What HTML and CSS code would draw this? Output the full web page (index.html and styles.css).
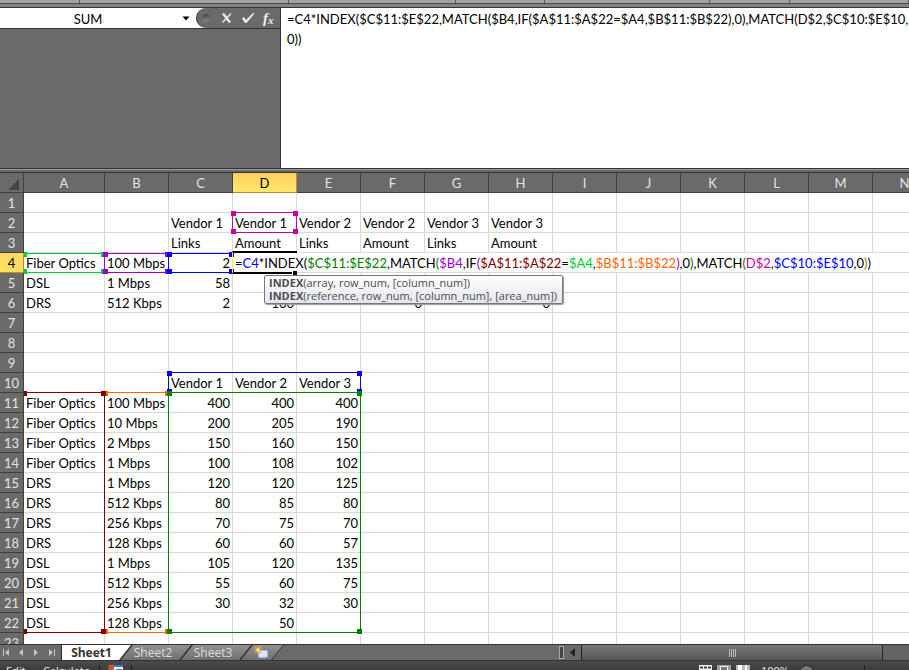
FILE: index.html
```
<!DOCTYPE html>
<html lang="en">
<head>
<meta charset="utf-8">
<title>Workbook</title>
<link rel="stylesheet" href="styles.css">
</head>
<body>
<div class="app">
  <div class="ribbon"><i></i><i></i><i></i><i></i><i></i><i></i><i></i></div>
  <header class="formula-bar">
    <div class="left-pane">
      <div class="name-row">
        <input class="name-box" type="text" value="SUM" aria-label="Name box">
        <button class="drop" aria-label="Open name list"><svg width="8" height="5" viewBox="0 0 8 5"><path d="M0.5 0.500h7L4 4.500z" fill="#000"/></svg></button>
        <div class="tools">
          <span class="knob"></span>
          <button aria-label="Cancel"><svg width="12" height="12" viewBox="0 0 12 12"><path d="M2 1.500L9 10.500" stroke="#e8e8e8" stroke-width="2.400" fill="none"/><path d="M10 1.500L1.500 10.500" stroke="#e8e8e8" stroke-width="1.400" fill="none"/></svg></button>
          <button aria-label="Enter"><svg width="14" height="12" viewBox="0 0 14 12"><path d="M1 6.500L3 5L5 8L12 1L13.500 1.500L5.500 11H4z" fill="#ededed"/></svg></button>
          <button class="fx" aria-label="Insert function">f<span>x</span></button>
        </div>
      </div>
    </div>
    <textarea class="formula" aria-label="Formula bar" spellcheck="false">=C4*INDEX($C$11:$E$22,MATCH($B4,IF($A$11:$A$22=$A4,$B$11:$B$22),0),MATCH(D$2,$C$10:$E$10,
0))</textarea>
  </header>
  <div class="splitter"></div>
  <main class="sheet">
    <table>
      <colgroup><col class="c-head"><col class="c-a"><col span="13"></colgroup>
      <thead><tr><th class="corner"><svg width="11" height="11" viewBox="0 0 11 11"><path d="M11 0v11H0z" fill="#454545"/></svg></th><th>A</th><th>B</th><th>C</th><th class="on">D</th><th>E</th><th>F</th><th>G</th><th>H</th><th>I</th><th>J</th><th>K</th><th>L</th><th>M</th><th>N</th></tr></thead>
      <tbody id="rows"></tbody>
    </table>
    <div class="ranges">
      <div class="range b-list"><i></i><i></i><i></i><i></i></div>
      <div class="range a-list"><i></i><i></i><i></i><i></i></div>
      <div class="range heads"><i></i><i></i><i></i><i></i></div>
      <div class="range data"><i></i><i></i><i></i><i></i></div>
      <div class="range vendor"><i></i><i></i><i></i><i></i></div>
      <div class="range key-a edit"><i></i><i></i><i></i><i></i></div>
      <div class="range key-b edit"><i></i><i></i><i></i><i></i></div>
      <div class="range count edit"><i></i><i></i><i></i><i></i></div>
      <div class="active"><i></i></div>
      <div class="hint"><div><b>INDEX</b>(array, row_num, [column_num])</div><div><b>INDEX</b>(reference, row_num, [column_num], [area_num])</div></div>
    </div>
  </main>
  <nav class="tabs">
    <div class="nav-buttons">
      <button aria-label="First sheet"><svg width="7" height="7" viewBox="0 0 7 7"><path d="M0 0h1v7H0zM6 0v7L2 3.500z"/></svg></button>
      <button aria-label="Previous sheet"><svg width="7" height="7" viewBox="0 0 7 7"><path d="M5 0v7L1 3.500z"/></svg></button>
      <button aria-label="Next sheet"><svg width="7" height="7" viewBox="0 0 7 7"><path d="M1 0v7L5 3.500z"/></svg></button>
      <button aria-label="Last sheet"><svg width="7" height="7" viewBox="0 0 7 7"><path d="M6 0h1v7H6zM1 0v7L5 3.500z"/></svg></button>
    </div>
    <button class="tab current"><span>Sheet1</span></button><button class="tab"><span>Sheet2</span></button><button class="tab"><span>Sheet3</span></button>
    <button class="tab add" aria-label="Insert worksheet"><svg width="15" height="13" viewBox="0 0 15 13"><path d="M4 4h10v7l-2 1H4z" fill="#dce6f5" stroke="#6c83ab"/><path d="M4 0v8M0 4h8M1 1l6 6M7 1L1 7" stroke="#f4a63a" stroke-width="1.200"/><circle cx="4" cy="4" r="1.500" fill="#fff3b0"/></svg></button>
    <div class="scroll">
      <span class="grip"></span>
      <button class="back" aria-label="Scroll left"><svg width="5" height="9" viewBox="0 0 5 9"><path d="M5 0v9L0 4.500z" fill="#222"/></svg></button>
      <div class="track"><div class="thumb"><i></i><i></i><i></i><i></i></div></div>
    </div>
  </nav>
  <footer class="status">
    <span class="mode">Edit</span><span class="calc">Calculate</span>
    <span class="macro"><svg width="15" height="12" viewBox="0 0 15 12"><path d="M1 0h14v12H1z" fill="#eef3fb"/><path d="M5 0h10v2H5zM8 4h6v1H8zM8 7h6v1H8z" fill="#3e74c8"/><circle cx="3" cy="3" r="3" fill="#d8472c"/></svg></span>
    <span class="views">
      <svg width="52" height="12" viewBox="0 0 52 12"><path d="M0 0h13v12H0z" fill="#eee"/><path d="M1 2.500h3M5 2.500h3M9 2.500h3" stroke="#444" stroke-width="2"/><path d="M18 0h14v12H18z" fill="#9aa0a8"/><path d="M21.500 1.500h7v9h-7z" fill="#777" stroke="#eee"/><path d="M37 0h14v12H37z" fill="#bbb"/><path d="M39 0h4v12h-4zM46 0h2v12h-2z" fill="#fff"/></svg>
      <span>100%</span><span class="zoom"></span><span class="mark"></span>
    </span>
  </footer>
</div>
<script src="sheet.js"></script>
</body>
</html>
```
FILE: sheet.js
```
const cells = {
  2: ["", "", "Vendor 1", "Vendor 1", "Vendor 2", "Vendor 2", "Vendor 3", "Vendor 3"],
  3: ["", "", "Links", "Amount", "Links", "Amount", "Links", "Amount"],
  4: ["Fiber Optics", "100 Mbps", 2],
  5: ["DSL", "1 Mbps", 58],
  6: ["DRS", "512 Kbps", 2, 160, "", 0, "", 0],
  10: ["", "", "Vendor 1", "Vendor 2", "Vendor 3"],
  11: ["Fiber Optics", "100 Mbps", 400, 400, 400],
  12: ["Fiber Optics", "10 Mbps", 200, 205, 190],
  13: ["Fiber Optics", "2 Mbps", 150, 160, 150],
  14: ["Fiber Optics", "1 Mbps", 100, 108, 102],
  15: ["DRS", "1 Mbps", 120, 120, 125],
  16: ["DRS", "512 Kbps", 80, 85, 80],
  17: ["DRS", "256 Kbps", 70, 75, 70],
  18: ["DRS", "128 Kbps", 60, 60, 57],
  19: ["DSL", "1 Mbps", 105, 120, 135],
  20: ["DSL", "512 Kbps", 55, 60, 75],
  21: ["DSL", "256 Kbps", 30, 32, 30],
  22: ["DSL", "128 Kbps", "", 50]
};
const formula = [
  ["", "="], ["blue", "C4"], ["", "*INDEX("], ["green", "$C$11:$E$22"], ["", ",MATCH"], ["green", "("],
  ["purple", "$B4"], ["", ",IF"], ["purple", "("], ["maroon", "$A$11:$A$22"], ["", "="], ["lime", "$A4"],
  ["", ","], ["orange", "$B$11:$B$22"], ["purple", ")"], ["", ",0"], ["green", ")"], ["", ",MATCH"],
  ["green", "("], ["pink", "D$2"], ["", ","], ["blue", "$C$10:$E$10"], ["", ",0"], ["olive", ")"], ["", ")"]
];
const body = document.getElementById("rows");
for (let r = 1; r <= 23; r++) {
  const tr = body.insertRow();
  const th = document.createElement("th");
  th.textContent = r;
  if (r === 4) th.className = "on";
  tr.append(th);
  const values = cells[r] || [];
  for (let c = 0; c < 14; c++) {
    const td = tr.insertCell();
    if (r === 4 && c === 3) {
      td.colSpan = 11;
      td.className = "editing";
      for (const [tone, text] of formula) {
        const s = document.createElement("span");
        if (tone) s.className = tone;
        s.textContent = text;
        td.append(s);
      }
      break;
    }
    const v = values[c];
    if (v === undefined) continue;
    td.textContent = v;
    if (typeof v === "number") td.className = "num";
  }
}
```
FILE: styles.css
```
* { box-sizing: border-box; }
body { margin: 0; font: 13px/20px Lato, "Liberation Sans", sans-serif; color: #000; background: #6a6a6a; }
button { border: 0; padding: 0; margin: 0; background: none; font: inherit; color: inherit; display: flex; align-items: center; justify-content: center; }
svg { display: block; }
.app { height: 100vh; display: flex; flex-direction: column; overflow: hidden; }

.ribbon { flex: none; height: 8px; display: grid; grid-template-columns: 80px 209px 167px 89px 165px 80px 1fr; background: linear-gradient(#a2a2a2 0 3px, #4a4a4a 3px 4px, #838383 4px 7px, #333 7px); }
.ribbon i { height: 3px; border-right: 1px solid #555; }

.formula-bar { flex: none; height: 160px; display: flex; }
.left-pane { flex: none; width: 281px; background: #6a6a6a; border-right: 1px solid #333; }
.name-row { display: flex; height: 21px; background: #fff; border-bottom: 1px solid #333; }
.name-box { flex: 1; min-width: 0; border: 0; padding: 1px 0 0; text-align: center; font: inherit; outline: 0; background: none; }
.drop { width: 20px; }
.tools { width: 84px; display: flex; align-items: center; gap: 8px; padding-left: 5px; background: #6a6a6a; border-radius: 12px 0 0 12px; border-left: 1px solid #333; }
.knob { width: 8px; height: 8px; margin-right: 3px; border-radius: 50%; background: linear-gradient(#444, #8a8a8a); }
.fx { font: italic bold 15px/18px "Liberation Serif", serif; color: #eee; }
.fx span { font-size: 11px; padding-top: 4px; }
.formula { flex: 1; min-width: 0; border: 0; padding: 1px 0 0 6px; margin: 0; outline: 0; resize: none; overflow: hidden; font: inherit; background: #fff; white-space: pre; }
.splitter { flex: none; height: 5px; background: linear-gradient(#333 0 1px, #999 1px 2px, #6a6a6a 2px 4px, #333 4px); }

.sheet { flex: 1; min-height: 0; position: relative; overflow: hidden; background: #fff; }
table { table-layout: fixed; width: 937px; border-collapse: separate; border-spacing: 0; }
col { width: 64px; }
.c-head { width: 24px; }
.c-a { width: 81px; }
tr { height: 20px; }
td, th { height: 20px; padding: 1px 2px 0; line-height: 18px; border: solid #d9d9d9; border-width: 0 1px 1px 0; white-space: nowrap; overflow: hidden; }
td, th { padding-top: 2px; line-height: 17px; }
th { padding-left: 0; padding-right: 0; font-weight: 400; text-align: center; background: #6a6a6a; color: #e4e4e4; border-color: #3f3f3f; }
th.on { color: #000; background: linear-gradient(#ffd05c, #ffe86c); border-color: #c28a30; }
tbody th.on { background: #ffdc62; }
.corner svg { margin: 1px 0 0 8px; }
.num { text-align: right; }
.blue { color: #00f; } .green { color: #008000; } .purple { color: #9900cc; } .maroon { color: #800000; }
.lime { color: #00cc33; } .orange { color: #ff6600; } .pink { color: #cc0099; } .olive { color: #808000; }

/* Range outlines share the column and row tracks of the table. */
.ranges { position: absolute; inset: 20px 0 0 24px; display: grid; grid-template-columns: 81px repeat(13, 64px); grid-template-rows: repeat(23, 20px); overflow: hidden; pointer-events: none; }
.range { position: relative; margin: -1px 0 0 -1px; border: 1px solid; }
.range.edit { margin-top: 0; }
.range i { position: absolute; width: 5px; height: 5px; background: currentColor; }
.range i:nth-child(1) { left: -2px; top: -2px; }
.range i:nth-child(2) { right: -2px; top: -2px; }
.range i:nth-child(3) { left: -2px; bottom: -2px; }
.range i:nth-child(4) { right: -2px; bottom: -2px; }
.a-list { grid-area: 11 / 1 / 23 / 2; color: #800000; }
.b-list { grid-area: 11 / 2 / 23 / 3; color: #ff6600; }
.heads { grid-area: 10 / 3 / 11 / 6; color: #00f; }
.data { grid-area: 11 / 3 / 23 / 6; color: #008000; }
.vendor { grid-area: 2 / 4 / 3 / 5; color: #cc0099; }
.key-a { grid-area: 4 / 1 / 5 / 2; color: #00cc33; }
.key-b { grid-area: 4 / 2 / 5 / 3; color: #9900cc; }
.count { grid-area: 4 / 3 / 5 / 4; color: #00f; }
.active { grid-area: 4 / 4 / 5 / 5; position: relative; margin: -2px 0 -1px -1px; border: solid #000; border-width: 2px 0; border-left: 1px solid #ff0; }
.active i { position: absolute; right: 0; bottom: -3px; width: 5px; height: 4px; background: #000; border-left: 1px solid #fff; }
.hint { position: absolute; left: 240px; top: 82px; padding: 0 5px 1px 4px; border: 1px solid #767676; border-radius: 2px; background: linear-gradient(#fff, #e4e5f0); box-shadow: 1px 1px 1px #999; font: 11px/13px "Open Sans", sans-serif; color: #4c4c4c; white-space: nowrap; }

.tabs { flex: none; height: 17px; display: flex; background: #6a6a6a; border-top: 1px solid #333; border-bottom: 1px solid #333; font: 12px/15px "Open Sans", sans-serif; }
.nav-buttons { width: 61px; display: flex; align-items: center; justify-content: space-between; padding: 0 6px 0 3px; fill: #c4c4c4; }
.tab { position: relative; width: 72px; margin-left: -12px; padding-right: 6px; color: #ddd; background: #2e2e2e; clip-path: polygon(12px 0, 100% 0, calc(100% - 12px) 100%, 0 100%); }
.tab::before { content: ""; position: absolute; inset: 0 1px; background: linear-gradient(#919191, #707070); clip-path: polygon(12px 0, 100% 0, calc(100% - 12px) 100%, 0 100%); }
.tab span, .tab svg { position: relative; }
.tab.current { width: 71px; margin-left: 0; padding-right: 10px; color: #333; font-weight: 700; clip-path: polygon(0 0, 100% 0, calc(100% - 12px) 100%, 0 100%); }
.tab.current::before { background: #fff; clip-path: polygon(0 0, 100% 0, calc(100% - 12px) 100%, 0 100%); }
.tab.add { width: 44px; padding-right: 2px; }
.scroll { margin-left: auto; width: 350px; display: flex; align-items: center; }
.grip { width: 5px; height: 13px; border: 1px solid #aaa; background: #444; }
.back { width: 17px; }
.track { flex: 1; align-self: stretch; padding-right: 26px; background: #646464; }
.thumb { height: 15px; display: flex; align-items: center; justify-content: center; gap: 1px; background: linear-gradient(#777, #585858); border: 1px solid #222; border-width: 0 1px; }
.thumb i { width: 1px; height: 8px; background: #bbb; }
.status { flex: none; height: 9px; overflow: hidden; display: flex; align-items: flex-start; padding: 4px 0 0 6px; background: linear-gradient(#4b4b4b, #3c3c3c); color: #eee; font: 11px/12px "Open Sans", sans-serif; }
.mode { width: 37px; }
.calc { width: 56px; }
.macro { border: solid #222; border-width: 0 1px; padding: 0 8px; }
.views { margin-left: auto; width: 210px; display: flex; gap: 10px; }
.zoom { width: 15px; height: 15px; border-radius: 50%; background: #777; border: 1px solid #222; }
.mark { width: 1px; height: 8px; margin-left: 40px; background: #222; }
```
